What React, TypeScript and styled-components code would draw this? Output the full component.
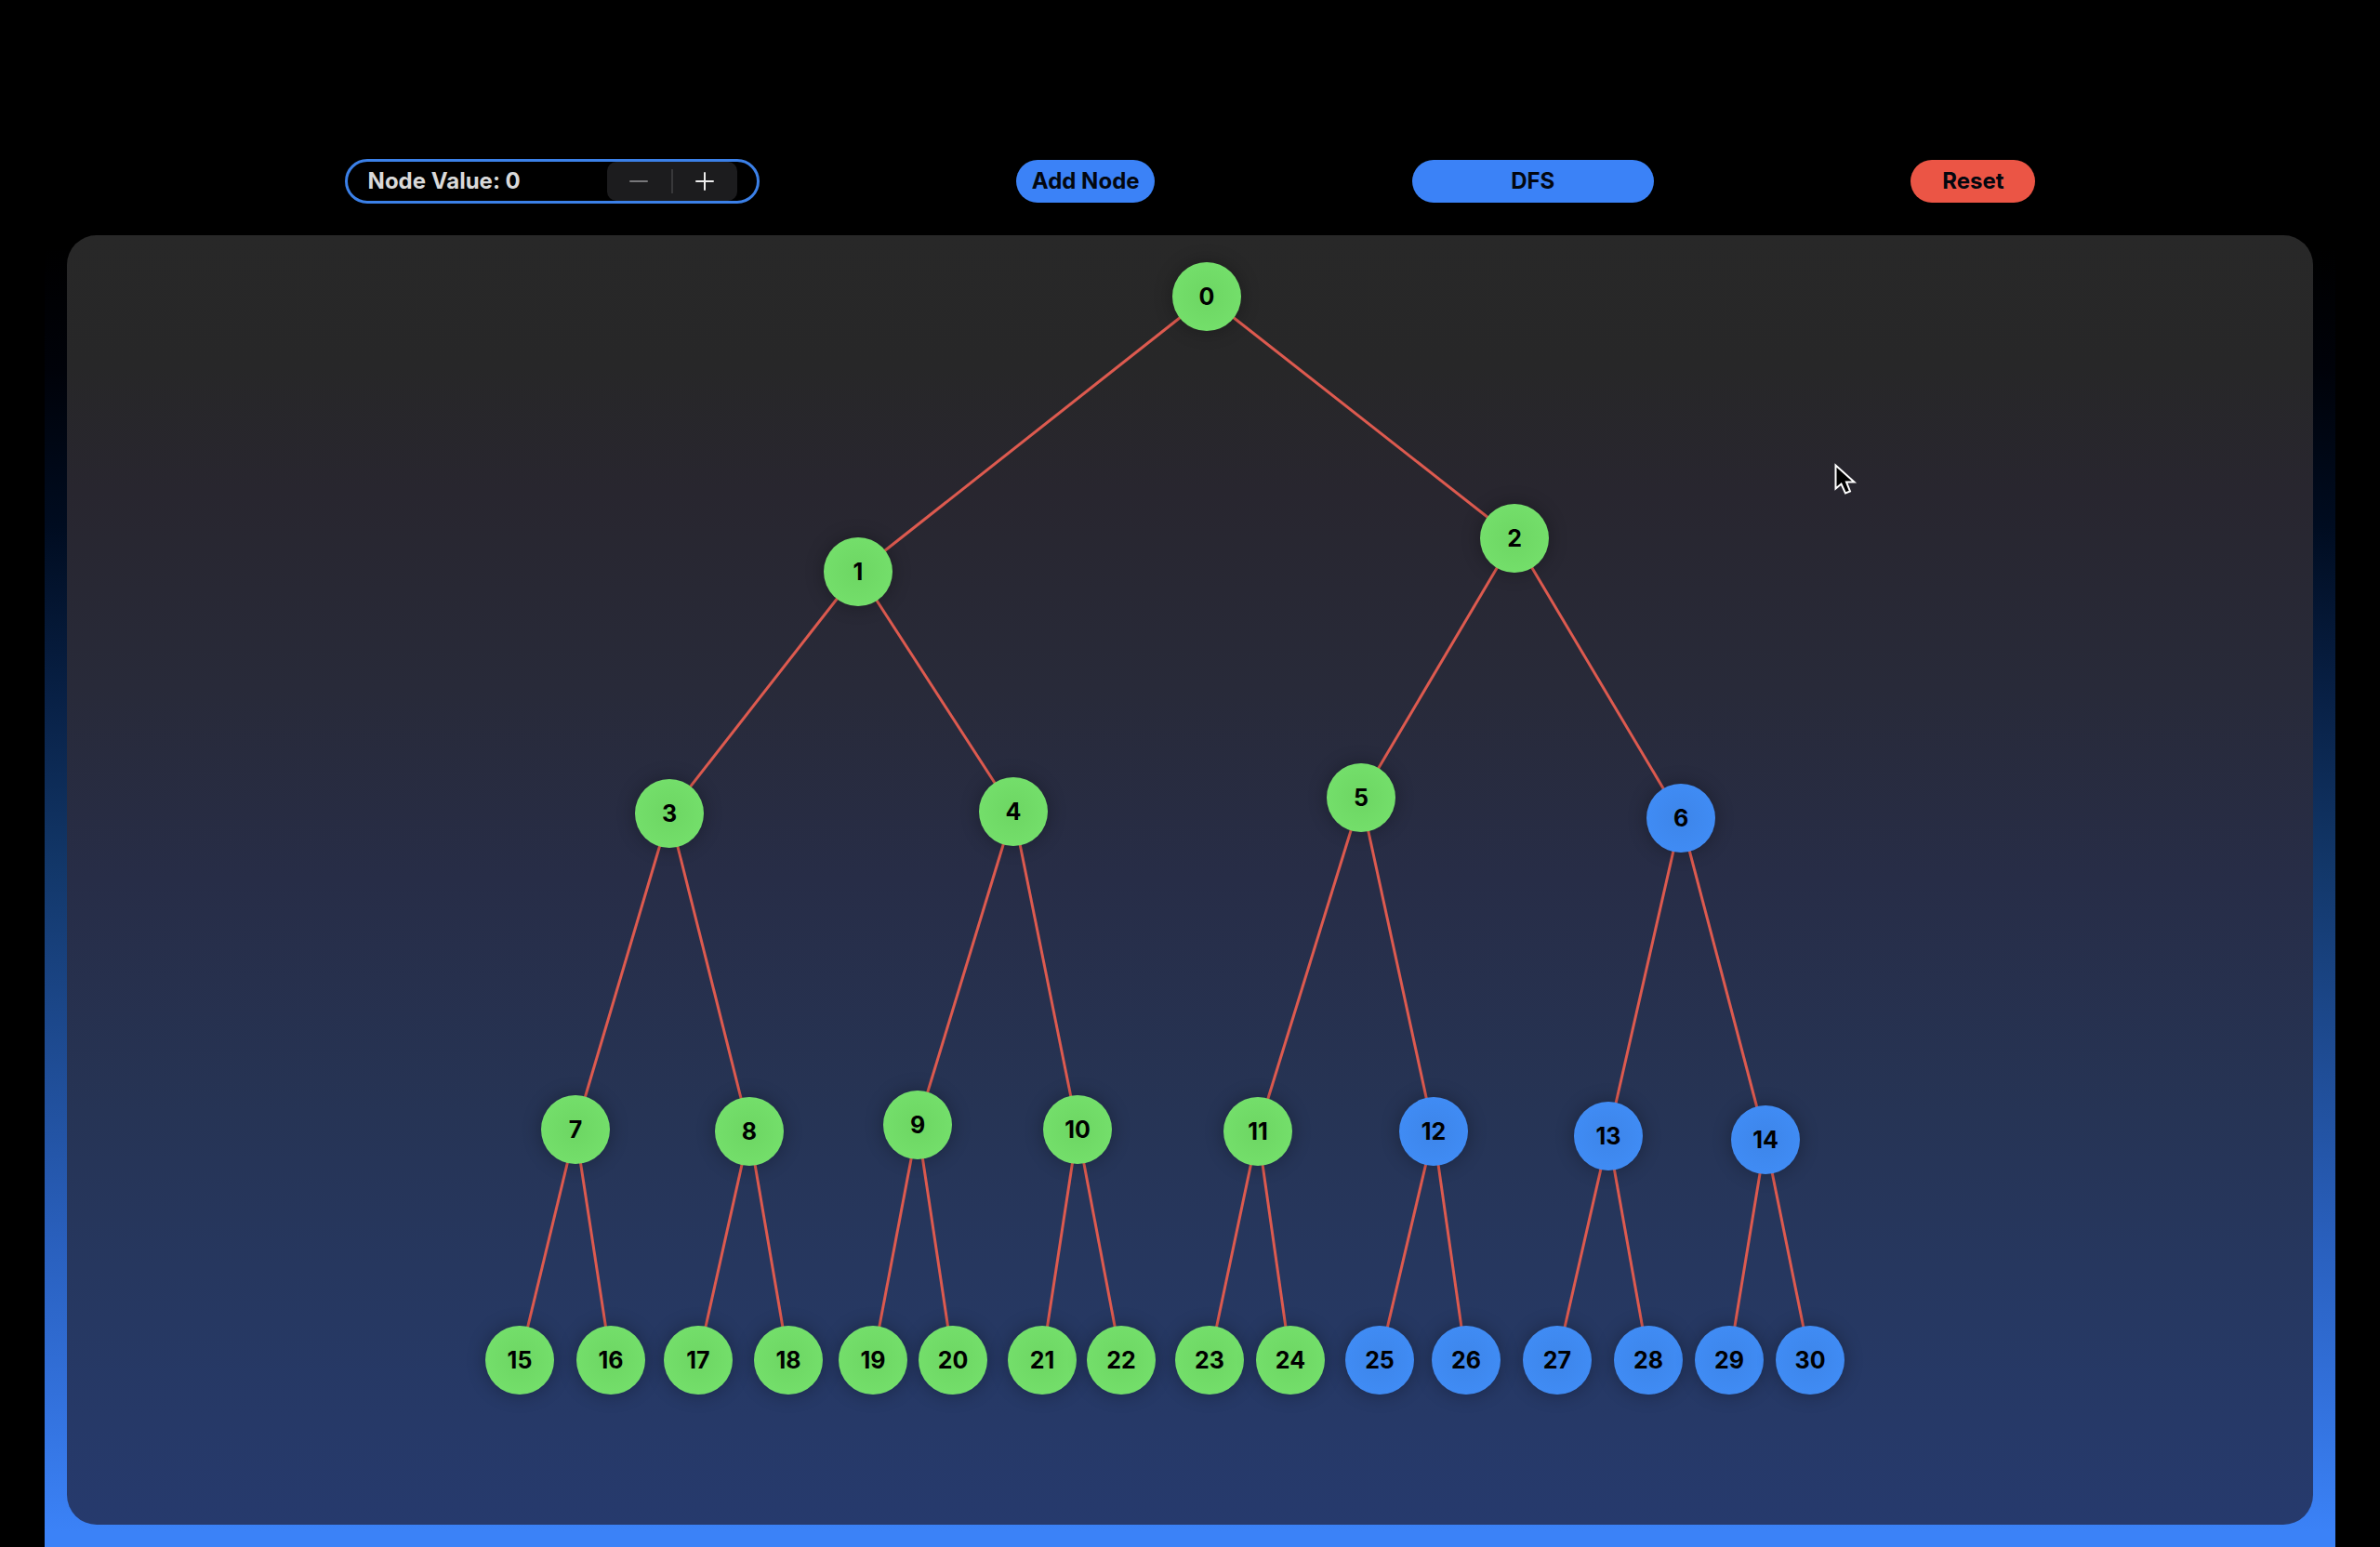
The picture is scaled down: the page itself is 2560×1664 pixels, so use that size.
import React, { useState } from "react";
import styled, { createGlobalStyle } from "styled-components";

const GlobalStyle = createGlobalStyle`
  *, *::before, *::after { box-sizing: border-box; }
  html, body { margin: 0; background: #000; }
  body { font-family: Inter, "Liberation Sans", sans-serif; font-size: 24px; line-height: 32px; font-weight: 700; }
`;

const Screen = styled.main`
  min-height: 100vh;
  margin: 0 48px;
  display: flex;
  flex-direction: column;
  background: linear-gradient(
    180deg,
    #000000 0%,
    #000000 16%,
    #000209 24%,
    #000c20 34%,
    #082045 45%,
    #123769 56%,
    #1e4b92 68%,
    #295fbc 80%,
    #3270da 90%,
    #3b82f7 99%,
    #3b82f7 100%
  );
`;

const Toolbar = styled.header`
  display: flex;
  justify-content: space-evenly;
  align-items: center;
  padding: 171px 46px 34px;
`;

const ValueField = styled.div`
  display: flex;
  align-items: stretch;
  justify-content: space-between;
  width: 446px;
  height: 48px;
  padding: 0 21px 0 22px;
  border: 3px solid #3b80e8;
  border-radius: 24px;
  color: #d9d9d9;
`;

const ValueText = styled.output`
  align-self: center;
`;

const Stepper = styled.div`
  display: flex;
  align-items: center;
  width: 140px;
  border-radius: 10px;
  background: #1c1c1e;
`;

const StepButton = styled.button`
  flex: 1;
  display: flex;
  align-items: center;
  justify-content: center;
  align-self: stretch;
  padding: 0;
  border: 0;
  background: none;
  color: #ececec;
  &:disabled { color: #77777a; }
`;

const Divider = styled.span`
  width: 2px;
  height: 26px;
  background: #38383a;
`;

const PillButton = styled.button<{ $width: number; $tone: string }>`
  width: ${(p) => p.$width}px;
  height: 46px;
  padding: 0;
  border: 0;
  border-radius: 23px;
  background: ${(p) => p.$tone};
  color: #03070f;
  font: inherit;
  white-space: nowrap;
`;

const Panel = styled.section`
  flex: 1;
  margin: 0 24px 24px;
  border-radius: 32px;
  background: linear-gradient(
    180deg,
    #282828 0%,
    #272728 10%,
    #28262f 20%,
    #282a39 35%,
    #272d47 50%,
    #263455 68%,
    #263862 84%,
    #263a6d 100%
  );
`;

const Canvas = styled.div`
  position: relative;
  width: 1600px;
  height: 1280px;
  margin: 0 auto;
`;

const Edges = styled.svg`
  position: absolute;
  inset: 0;
  width: 100%;
  height: 100%;
  stroke: #dd5a4f;
  stroke-width: 3;
`;

const NodeCircle = styled.div<{ $x: number; $y: number; $visited: boolean }>`
  position: absolute;
  left: ${(p) => p.$x - 37}px;
  top: ${(p) => p.$y - 37}px;
  width: 74px;
  height: 74px;
  display: flex;
  align-items: center;
  justify-content: center;
  border-radius: 50%;
  color: #000;
  font-size: 25px;
  background: ${(p) =>
    p.$visited
      ? "radial-gradient(circle, #6dd663 0%, #74df6b 75%)"
      : "radial-gradient(circle, #3d85e9 0%, #408cf5 75%)"};
  box-shadow: 0 0 20px rgba(0, 0, 0, 0.3);
`;

const Pointer = styled.svg`
  position: absolute;
  left: 1492px;
  top: 243px;
  width: 26px;
  height: 38px;
`;

const points: [number, number][] = [
  [818, 66], [443, 362], [1149, 326], [240, 622], [610, 620], [984, 605], [1328, 627],
  [139, 962], [326, 964], [507, 957], [679, 962], [873, 964], [1062, 964], [1250, 969], [1419, 973],
  [79, 1210], [177, 1210], [271, 1210], [368, 1210], [459, 1210], [545, 1210], [641, 1210], [726, 1210],
  [821, 1210], [908, 1210], [1004, 1210], [1097, 1210], [1195, 1210], [1293, 1210], [1380, 1210], [1467, 1210],
];

const unvisited = new Set([6, 12, 13, 14, 25, 26, 27, 28, 29, 30]);

export default function App() {
  const [value, setValue] = useState(0);
  return (
    <>
      <GlobalStyle />
      <Screen>
        <Toolbar>
          <ValueField>
            <ValueText>Node Value: {value}</ValueText>
            <Stepper>
              <StepButton aria-label="Decrease" disabled={value === 0} onClick={() => setValue(value - 1)}>
                <svg width="20" height="20" viewBox="0 0 20 20" stroke="currentColor" strokeWidth="2" strokeLinecap="round">
                  <path d="M1 10H19" />
                </svg>
              </StepButton>
              <Divider />
              <StepButton aria-label="Increase" onClick={() => setValue(value + 1)}>
                <svg width="20" height="20" viewBox="0 0 20 20" stroke="currentColor" strokeWidth="2" strokeLinecap="round">
                  <path d="M1 10H19M10 1V19" />
                </svg>
              </StepButton>
            </Stepper>
          </ValueField>
          <PillButton $width={149} $tone="#3b82f7">Add Node</PillButton>
          <PillButton $width={260} $tone="#3b82f7">DFS</PillButton>
          <PillButton $width={134} $tone="#eb5545">Reset</PillButton>
        </Toolbar>
        <Panel>
          <Canvas>
            <Edges aria-hidden="true">
              {points.slice(1).map(([x, y], i) => {
                const [px, py] = points[Math.floor(i / 2)];
                return <line key={i} x1={px} y1={py} x2={x} y2={y} />;
              })}
            </Edges>
            {points.map(([x, y], i) => (
              <NodeCircle key={i} $x={x} $y={y} $visited={!unvisited.has(i)}>
                {i}
              </NodeCircle>
            ))}
            <Pointer viewBox="0 0 26 38" aria-hidden="true">
              <path
                d="M2.5 4.5V29.5L8.5 24.5L13 34.5L18 32.5L14 22.5H22.5Z"
                fill="#000"
                stroke="#fff"
                strokeWidth="2"
              />
            </Pointer>
          </Canvas>
        </Panel>
      </Screen>
    </>
  );
}
